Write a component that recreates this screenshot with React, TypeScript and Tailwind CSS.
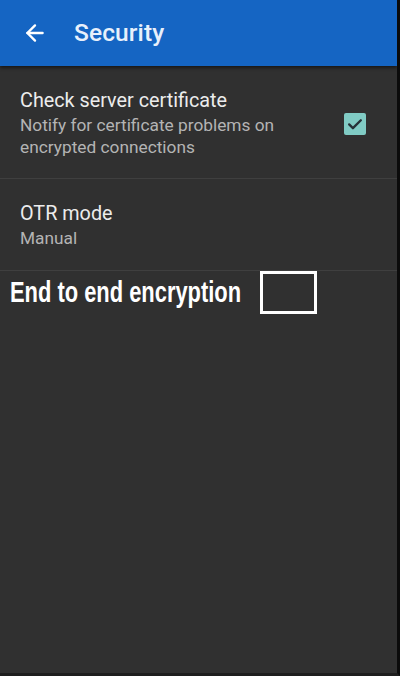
import { ArrowLeft } from "lucide-react"

export default function App() {
  return (
    <div
      className="w-[400px] h-[676px] flex flex-col bg-[#303030] border-r-[3px] border-b-[3px] border-r-[#0b0b0b] border-b-[#1e1e1e] overflow-hidden"
      style={{ fontFamily: "Roboto, 'Noto Sans', sans-serif" }}
    >
      <header className="h-[66px] shrink-0 flex items-center bg-[#1565c3] shadow-[0_2px_3px_rgba(0,0,0,0.5)]">
        <ArrowLeft className="ml-[22px] text-white" size={26} strokeWidth={2.2} />
        <h1 className="ml-[26px] text-[24.5px] font-medium text-[#e8f0fb] tracking-[0.1px]">Security</h1>
      </header>

      <div className="flex items-center pl-5 pr-[31px] pt-[22px] pb-[20px] border-b border-[#3f3f3f]">
        <div className="flex-1">
          <div className="text-[19.8px] leading-[25px] text-[#ececec]">Check server certificate</div>
          <div className="mt-[1px] text-[17.3px] leading-[22px] text-[#b4b4b4]">
            Notify for certificate problems on
            <br />
            encrypted connections
          </div>
        </div>
        <div className="w-[22px] h-[22px] rounded-[2px] bg-[#80cbc4] flex items-center justify-center mt-[2px]">
          <svg width="20" height="20" viewBox="0 0 24 24" fill="none" stroke="#263238" strokeWidth="2.8" strokeLinecap="round" strokeLinejoin="round">
            <path d="M5 12.5l4.5 4.5L19 7.5" />
          </svg>
        </div>
      </div>

      <div className="pl-5 pt-[22px] pb-[21px] border-b border-[#3f3f3f]">
        <div className="text-[19.8px] leading-[25px] text-[#ececec]">OTR mode</div>
        <div className="mt-[1px] text-[17.3px] leading-[22px] text-[#b4b4b4]">Manual</div>
      </div>

      <div className="flex items-center pl-[10px]">
        <span
          className="text-[29px] font-bold text-white leading-none inline-block origin-left scale-x-[0.755] w-[231px] whitespace-nowrap"
          style={{ fontFamily: "'Liberation Sans Narrow', 'Liberation Sans', Arial, sans-serif" }}
        >
          End to end encryption
        </span>
        <div className="ml-[19px] w-[57px] h-[43px] border-[3px] border-white" />
      </div>
    </div>
  )
}
